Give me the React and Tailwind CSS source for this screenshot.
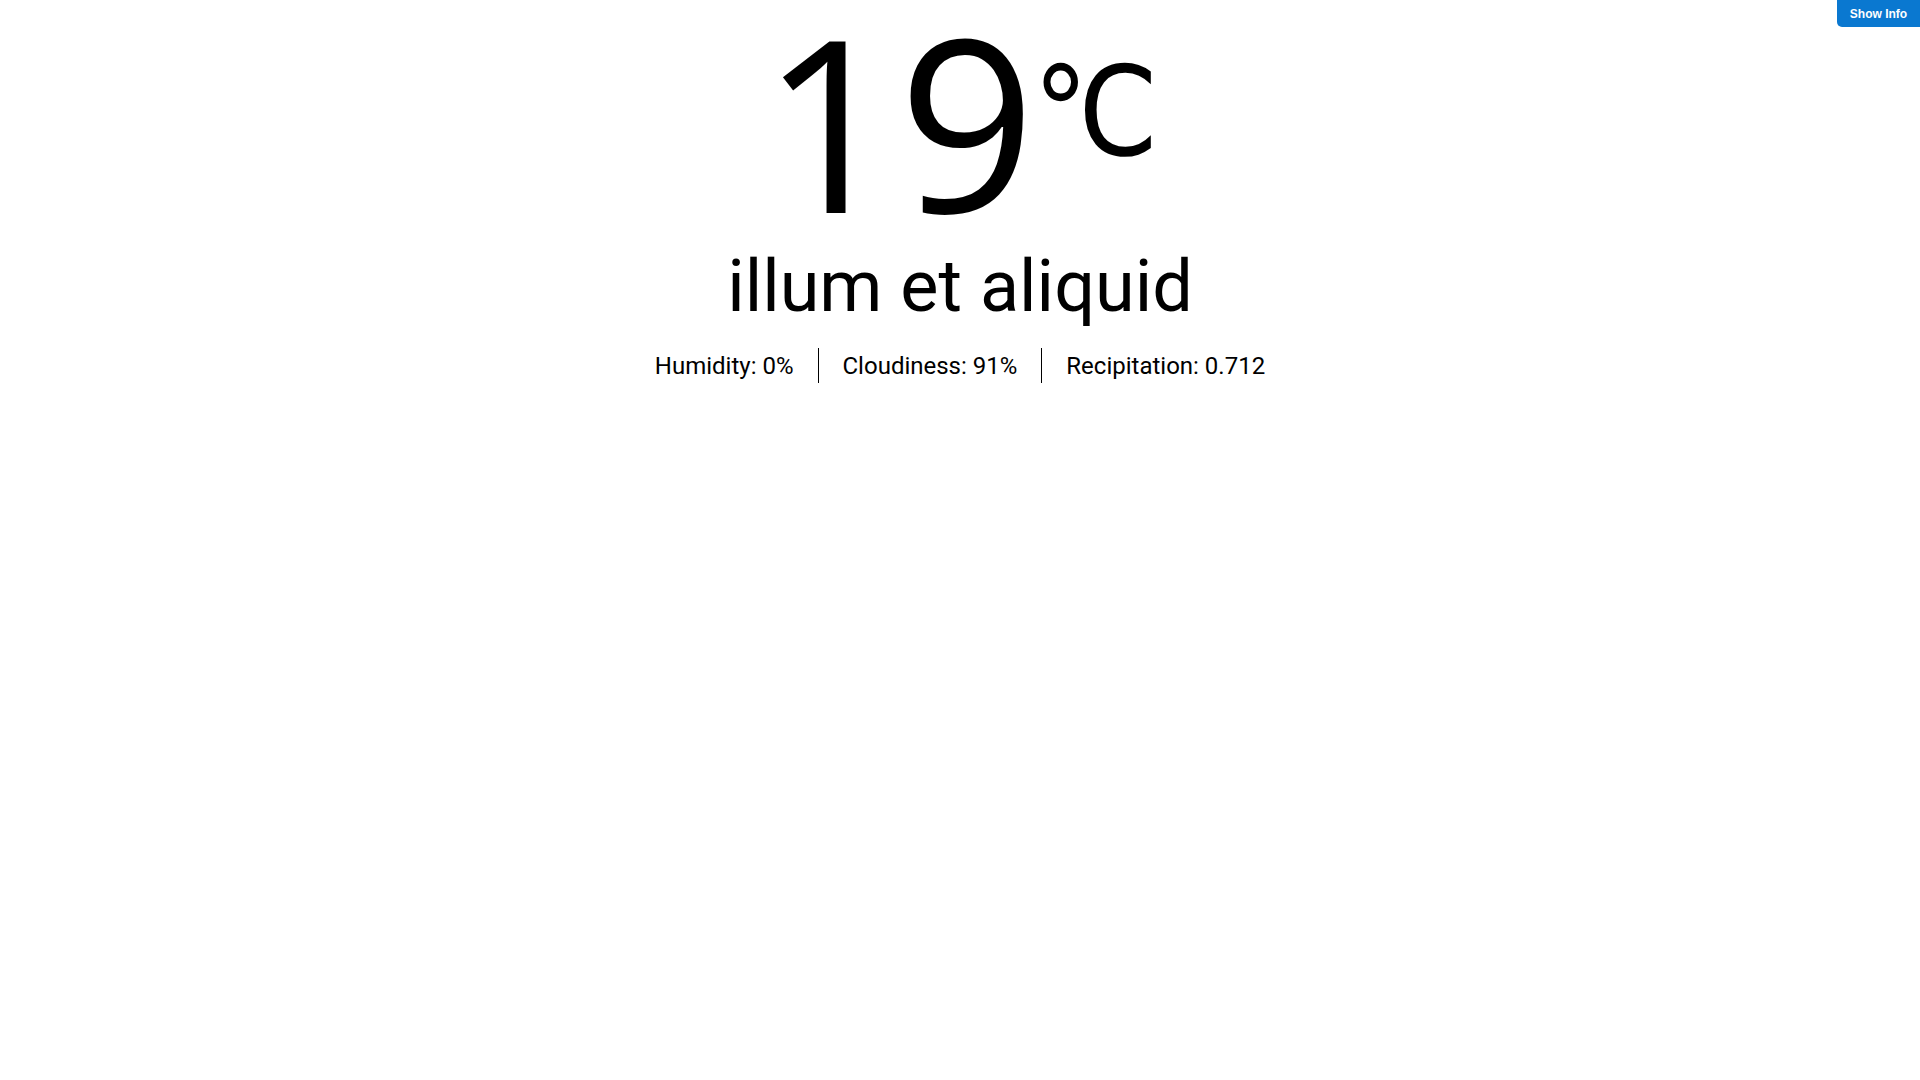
export default function App() {
  return (
    <div className="relative min-h-screen bg-white text-black">
      <button className="absolute top-0 right-0 h-[27px] w-[83px] rounded-bl-[5px] bg-[#0a78d0] text-[12px] font-bold text-white font-['Liberation_Sans',Arial,sans-serif]">
        Show Info
      </button>
      <div className="flex flex-col items-center">
        <div className="whitespace-nowrap font-['Open_Sans',sans-serif] text-[240px] leading-none">
          19<span className="ml-[-3px] font-['DejaVu_Sans_Condensed','DejaVu_Sans',sans-serif] text-[124.5px] align-[58px]">℃</span>
        </div>
        <div className="mt-[5px] font-['Roboto',sans-serif] text-[72px] leading-[84px]">illum et aliquid</div>
        <div className="mt-[19px] flex items-center font-['Roboto',sans-serif] text-2xl leading-8">
          <div className="px-6">Humidity: 0%</div>
          <div className="h-[35px] w-px bg-black"></div>
          <div className="px-6">Cloudiness: 91%</div>
          <div className="h-[35px] w-px bg-black"></div>
          <div className="px-6">Recipitation: 0.712</div>
        </div>
      </div>
    </div>
  );
}
